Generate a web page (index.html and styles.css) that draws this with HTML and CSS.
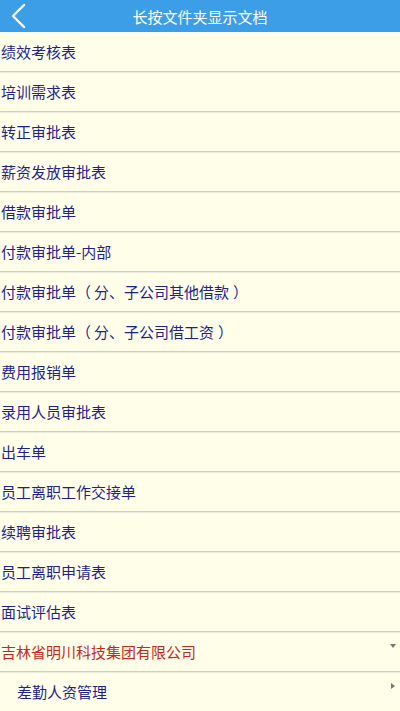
FILE: index.html
```html
<!DOCTYPE html>
<html lang="zh">
<head>
<meta charset="utf-8">
<link rel="stylesheet" href="styles.css">
</head>
<body>
<div class="header">
  <svg class="back" width="18" height="26" viewBox="0 0 18 26"><path d="M14 2 L3 13 L14 24" fill="none" stroke="#fff" stroke-width="2.4" stroke-linecap="round" stroke-linejoin="round"/></svg>
  <div class="title">长按文件夹显示文档</div>
</div>
<div class="list">
  <div class="row">绩效考核表</div>
  <div class="row">培训需求表</div>
  <div class="row">转正审批表</div>
  <div class="row">薪资发放审批表</div>
  <div class="row">借款审批单</div>
  <div class="row">付款审批单-内部</div>
  <div class="row"><span>付款审批单<span class="pl">（</span>分、子公司其他借款<span class="pr">）</span></span></div>
  <div class="row"><span>付款审批单<span class="pl">（</span>分、子公司借工资<span class="pr">）</span></span></div>
  <div class="row">费用报销单</div>
  <div class="row">录用人员审批表</div>
  <div class="row">出车单</div>
  <div class="row">员工离职工作交接单</div>
  <div class="row">续聘审批表</div>
  <div class="row">员工离职申请表</div>
  <div class="row">面试评估表</div>
  <div class="row red">吉林省明川科技集团有限公司<span class="tri-down"></span></div>
  <div class="row sub">差勤人资管理<span class="tri-right"></span></div>
</div>
</body>
</html>
```
FILE: styles.css
```css
html, body { margin: 0; padding: 0; }
body {
  width: 400px;
  height: 711px;
  overflow: hidden;
  background: #fffee8;
  font-family: "Noto Sans CJK SC", "Noto Sans", sans-serif;
  text-spacing-trim: space-all;
}
.header {
  position: relative;
  height: 32px;
  background: #3b9ee6;
  display: flex;
  align-items: center;
  justify-content: center;
}
.back { position: absolute; left: 10px; top: 3px; }
.title { color: #fff; font-size: 15px; }
.row {
  position: relative;
  height: 39px;
  border-bottom: 1px solid #cfcfc4;
  box-shadow: 0 1px 0 #ebebdc;
  display: flex;
  align-items: center;
  padding-left: 1px;
  font-size: 15px;
  color: #1f1f8e;
  white-space: nowrap;
}
.pl { margin-right: 3px; }
.pr { margin-left: 4px; }
.row.red { color: #c32a22; }
.row.sub { padding-left: 17px; }
.tri-down {
  position: absolute;
  right: 4px;
  top: 12px;
  width: 0; height: 0;
  border-left: 3px solid transparent;
  border-right: 3px solid transparent;
  border-top: 4px solid #777;
}
.tri-right {
  position: absolute;
  right: 5px;
  top: 11px;
  width: 0; height: 0;
  border-top: 3px solid transparent;
  border-bottom: 3px solid transparent;
  border-left: 4px solid #777;
}
```
